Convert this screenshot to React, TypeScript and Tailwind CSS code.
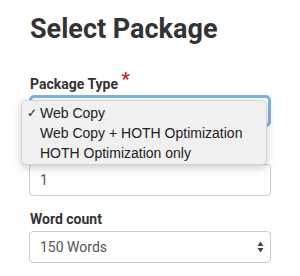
import React from 'react';

export default function App() {
    return (
        <div className="w-[300px] h-[276px] bg-white font-['Roboto',sans-serif] text-[#333] px-[29px] pt-[12px] overflow-hidden">
            {/* Heading */}
            <h1 className="text-[27px] leading-[34px] font-bold pl-[1px]">Select Package</h1>

            {/* Package type */}
            <label className="block mt-[27px] text-[14px] leading-[20px] font-bold pl-[1px]">
                Package Type <span className="relative -top-[4px] text-[18px] text-[#c9252c]">*</span>
            </label>
            <div className="relative mt-[1px]">
                <div className="h-[32px] rounded-[5px] border-[3px] border-[#7fb2ea] bg-white flex items-center justify-end pr-[4px]">
                    <SelectArrows />
                </div>

                {/* Open native menu */}
                <div className="absolute left-[-8px] top-[5px] w-[246px] h-[65px] rounded-[5px] border border-[#d4d4d4] bg-[#f0f0f0] shadow-[0_3px_8px_rgba(0,0,0,0.2)] pt-[2px] font-['Liberation_Sans',Arial,sans-serif] text-[14px] text-[#222]">
                    <div className="flex h-[20px] items-center">
                        <span className="w-[18px] pl-[5px] text-[12px]">✓</span>
                        <span>Web Copy</span>
                    </div>
                    <div className="flex h-[20px] items-center pl-[18px]">Web Copy + HOTH Optimization</div>
                    <div className="flex h-[20px] items-center pl-[18px]">HOTH Optimization only</div>
                </div>
            </div>

            {/* field label hidden under the menu */}
            <div className="mt-[14px] h-[20px]" />
            <div className="mt-[3px] h-[32px] rounded-[4px] border border-[#ccc] bg-white flex items-center px-[10px] text-[14px] text-[#555]">
                1
            </div>

            {/* Word count */}
            <label className="block mt-[13px] text-[14px] leading-[20px] font-bold pl-[1px]">Word count</label>
            <div className="mt-[2px] h-[32px] rounded-[4px] border border-[#ccc] bg-white flex items-center justify-between pl-[10px] pr-[6px] text-[14px] text-[#555]">
                <span>150 Words</span>
                <SelectArrows />
            </div>
        </div>
    );
}

function SelectArrows() {
    return (
        <svg width="7" height="12" viewBox="0 0 7 12" className="fill-[#444]">
            <path d="M3.5 0.5 L6.5 5 L0.5 5 Z" />
            <path d="M0.5 7 L6.5 7 L3.5 11.5 Z" />
        </svg>
    );
}
